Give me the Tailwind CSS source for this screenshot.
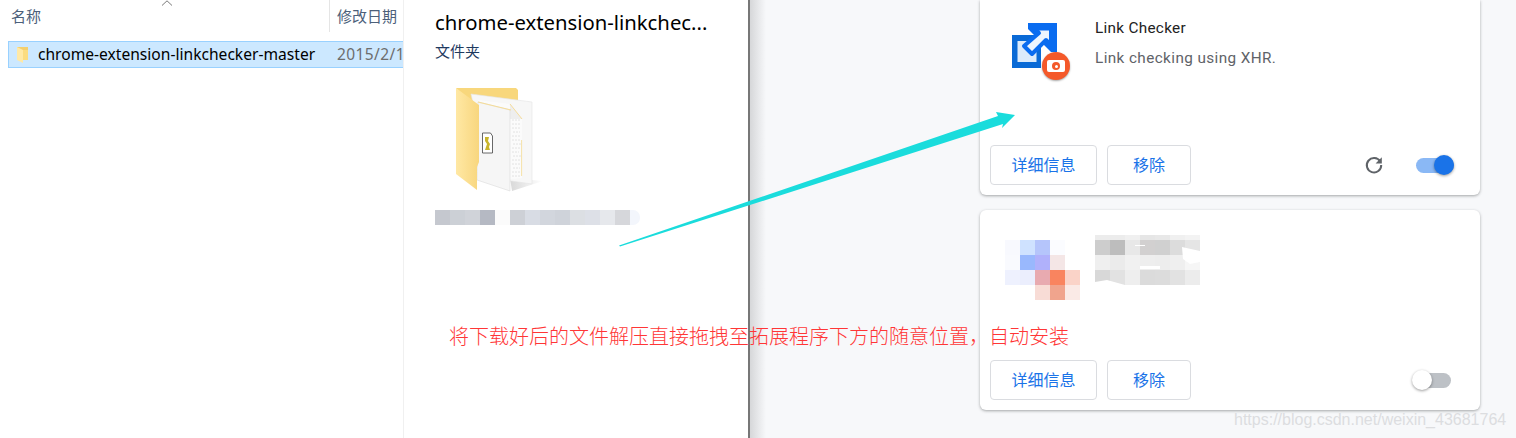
<!DOCTYPE html>
<html lang="zh-CN">
<head>
<meta charset="UTF-8">
<title>Link Checker</title>
<script src="https://cdn.jsdelivr.net/npm/@tailwindcss/browser@4"></script>
</head>
<body class="relative w-[1516px] h-[438px] overflow-hidden bg-[#f7f8fa] font-['Noto_Sans','Noto_Sans_CJK_SC',sans-serif]">
<div class="flex h-full">
  <!-- explorer list -->
  <div class="w-[403px] h-full shrink-0 bg-white overflow-hidden">
    <div class="flex h-[32px] text-[15px] text-[#4c607a] relative">
      <div class="w-[330px] border-r border-[#e5e5e5] pl-[11px] pt-[5px] font-['Noto_Sans_CJK_SC',sans-serif]">名称</div>
      <div class="pl-[7px] pt-[5px] font-['Noto_Sans_CJK_SC',sans-serif]">修改日期</div>
      <svg class="absolute left-[161px] top-0" width="12" height="6" viewBox="0 0 12 6" fill="none" stroke="#7a7a7a"><path d="M1 5.5 6 .8l5 4.7"/></svg>
    </div>
    <div class="mt-[9px] ml-[8px] h-[27px] flex items-center bg-[#cce8ff] border border-[#99d1ff] border-r-0 overflow-hidden whitespace-nowrap">
      <svg class="ml-[7px] shrink-0" width="14" height="18" viewBox="0 0 14 18"><path d="M1 1h11v13H1z" fill="#f3cf6e"/><path d="M1 1l6 3v13l-6-3z" fill="#ffe9a6"/><path d="M7 4h5v10H7z" fill="#fbdc80"/></svg>
      <span class="ml-[8px] w-[299px] shrink-0 text-[15.6px] text-black">chrome-extension-linkchecker-master</span>
      <span class="text-[15.5px] text-[#6d6d6d] tracking-[.4px]">2015/2/1</span>
    </div>
  </div>
  <!-- preview pane -->
  <div class="w-[347px] h-full shrink-0 bg-white border-l border-[#f0f0f0] border-r-2 border-r-[#777] pl-[31px]">
    <div class="pt-[8px] text-[20.3px] leading-[28px] text-black whitespace-nowrap">chrome-extension-linkchec...</div>
    <div class="mt-[5px] text-[15px] leading-[20px] text-[#1f3a5f] font-['Noto_Sans_CJK_SC',sans-serif]">文件夹</div>
    <svg class="mt-[24px] ml-[15px] block" width="95" height="110" viewBox="450 85 95 110">
      <defs>
        <linearGradient id="flap" x1="0" x2="1"><stop offset="0" stop-color="#ffe8a4"/><stop offset="1" stop-color="#f8d67e"/></linearGradient>
        <linearGradient id="shade" x1="0" x2="1"><stop offset="0" stop-color="#d8d8d8"/><stop offset="1" stop-color="#ffffff"/></linearGradient>
      </defs>
      <path d="M510 178 543 181 512 191Z" fill="url(#shade)"/>
      <path d="M456 88H516L518 90V106H470Z" fill="#f8d77c"/>
      <path d="M471 94 532 102V184L490 178Z" fill="#f7f7f7" stroke="#e4e4e4" stroke-width=".6"/>
      <path d="M478 100 510 104 522 119V178L490 181Z" fill="#fbfbfb"/>
      <path d="M510 104 522 119H510Z" fill="#eeeeee"/>
      <path d="M510 104 522 119" stroke="#f6dc9a" stroke-width="1"/>
      <path d="M512 120h9M512 124h8M512 128h9M513 132h7M512 136h9M512 140h8M513 144h8M512 148h9M512 152h7M513 156h8M512 160h9M512 164h8M513 168h7M512 172h9M512 176h8" stroke="#e2e2e2" stroke-width="1" stroke-dasharray="2 1"/>
      <path d="M521.6 140v36" stroke="#f6e2a8" stroke-width="1"/>
      <path d="M478 102 510 110V191L477 180Z" fill="#f6f6f6" stroke="#dcdcdc" stroke-width=".6"/>
      <path d="M478 102 511 110" stroke="#f5dc98" stroke-width="1.2"/>
      <path d="M456 88 479 105V162L477 167V190L456 174Z" fill="url(#flap)"/>
      <path d="M482.5 133h8l2 3v17h-10Z" fill="#fff" stroke="#444" stroke-width=".8"/>
      <path d="M485 137h4l-1 4 2 3-1 3 1 3h-5l1-3 1-3-2-3Z" fill="#c9b52c"/>
    </svg>
    <div class="mt-[15px] flex h-[15px] w-[205px] overflow-hidden rounded-r-[7px]">
      <div class="w-[15px] bg-[#c5c8cf]"></div><div class="w-[15px] bg-[#ccd0d6]"></div><div class="w-[15px] bg-[#d0d3d9]"></div><div class="w-[15px] bg-[#b5b9c3]"></div><div class="w-[15px] bg-[#fbfbfb]"></div><div class="w-[15px] bg-[#cdd0d6]"></div><div class="w-[15px] bg-[#d8dce4]"></div><div class="w-[15px] bg-[#d2d6dd]"></div><div class="w-[15px] bg-[#cfd3da]"></div><div class="w-[15px] bg-[#dcdfe3]"></div><div class="w-[15px] bg-[#dde0e7]"></div><div class="w-[15px] bg-[#e6e8ec]"></div><div class="w-[15px] bg-[#d6d7db]"></div><div class="w-[10px] bg-[#f3f6fc]"></div>
    </div>
  </div>
  <!-- extensions page -->
  <div class="relative flex-1 h-full pl-[230px]">
    <div class="absolute left-0 top-0 w-[16px] h-full bg-gradient-to-r from-[#d6d7d9] to-transparent"></div>
    <div class="w-[500px] h-[195px] mt-0 bg-white rounded-b-[6px] shadow-[0_1px_3px_rgba(60,64,67,.45)] flex flex-col relative">
      <div class="flex flex-1 pl-[32px] pt-[23px]">
        <div class="relative w-[45px] h-[45px] shrink-0">
          <svg class="blur-[0.5px]" width="45" height="45" viewBox="0 0 45 45">
            <rect x="0" y="12" width="29" height="33" fill="#0a6ad6"/>
            <rect x="5.5" y="18" width="19" height="21" fill="#dcebfb"/>
            <path d="M16 0H45V29H39L16 6Z" fill="#0a6cf0"/>
            <path d="M22 5.5H39V22L34 17 20 31 12 23 27 10Z" fill="#eef5fe" stroke="#0a6cf0" stroke-width="4" stroke-linejoin="round"/>
          </svg>
          <div class="absolute left-[30px] top-[29px] w-[28px] h-[28px] rounded-full bg-[#f4592a] shadow-[0_1px_2px_rgba(0,0,0,.35)] flex items-center justify-center">
            <div class="w-[18px] h-[12px] rounded-[2px] bg-white flex items-center justify-center">
              <div class="w-[8px] h-[8px] rounded-full bg-[#f4592a] flex items-center justify-center"><div class="w-[3px] h-[3px] rounded-full bg-white"></div></div>
            </div>
          </div>
        </div>
        <div class="ml-[38px] font-['Roboto',sans-serif]">
          <div class="-mt-[5px] text-[15.3px] leading-[20px] text-[#222] tracking-[.3px]">Link Checker</div>
          <div class="mt-[10px] text-[15.3px] leading-[20px] text-[#5f6368] tracking-[.4px]">Link checking using XHR.</div>
        </div>
      </div>
      <div class="flex items-center pl-[10px] pb-[10px] h-[50px]">
        <button class="w-[107px] h-[40px] pb-[2px] border border-[#dadce0] rounded-[4px] text-[16px] text-[#1a73e8] font-['Noto_Sans_CJK_SC',sans-serif]">详细信息</button>
        <button class="ml-[10px] w-[84px] h-[40px] pb-[2px] border border-[#dadce0] rounded-[4px] text-[16px] text-[#1a73e8] font-['Noto_Sans_CJK_SC',sans-serif]">移除</button>
        <svg class="ml-[173px]" width="20" height="20" viewBox="0 0 20 20" fill="none"><path d="M16.2 6.6A7.2 7.2 0 1 0 17.2 10" stroke="#5f6368" stroke-width="2"/><path d="M17.8 2.2V8.4H11.6Z" fill="#5f6368"/></svg>
        <div class="relative ml-[32px] w-[38px] h-[15px] rounded-full bg-[#8ab8f5]">
          <div class="absolute right-0 -top-[2.5px] w-[20px] h-[20px] rounded-full bg-[#1a73e8] shadow-[0_1px_3px_rgba(0,0,0,.4)]"></div>
        </div>
      </div>
    </div>
    <div class="w-[500px] h-[200px] mt-[15px] bg-white rounded-[6px] shadow-[0_1px_3px_rgba(60,64,67,.45)] flex flex-col">
      <div class="flex flex-1 pl-[25px] pt-[25px]">
        <div class="grid grid-cols-[repeat(5,15px)] grid-rows-[repeat(4,15px)] mt-[5px] h-[60px]">
          <div class="bg-[#f8f9fe]"></div><div class="bg-[#cfe2ff]"></div><div class="bg-[#b5c5fb]"></div><div class="bg-[#fbfcff]"></div><div></div>
          <div class="bg-[#f9fafe]"></div><div class="bg-[#99b8fd]"></div><div class="bg-[#b0b1fb]"></div><div class="bg-[#f4e6e6]"></div><div></div>
          <div class="bg-[#eef1fe]"></div><div class="bg-[#ebeefd]"></div><div class="bg-[#e8aab0]"></div><div class="bg-[#f9845f]"></div><div class="bg-[#fad3c8]"></div>
          <div></div><div></div><div class="bg-[#f8dcd6]"></div><div class="bg-[#f0a48d]"></div><div class="bg-[#faeae6]"></div>
        </div>
        <div class="relative ml-[15px] grid grid-cols-[repeat(7,15px)] grid-rows-[5px_15px_15px_15px] h-[50px]">
          <div class="bg-[#ececec]"></div><div class="bg-[#ececec]"></div><div class="bg-[#f0f0f0]"></div><div class="bg-[#e6e6e6]"></div><div class="bg-[#e8e8e8]"></div><div class="bg-[#f0f0f0]"></div><div class="bg-[#f3f3f3]"></div>
          <div class="bg-[#cdcdcd]"></div><div class="bg-[#bdbdbd]"></div><div class="bg-[#e8e8e8]"></div><div class="bg-[#d2d0d0]"></div><div class="bg-[#d0d0d0]"></div><div class="bg-[#dcdcdc]"></div><div class="bg-[#e5e5e5]"></div>
          <div class="bg-[#efefef]"></div><div class="bg-[#ebebeb]"></div><div class="bg-[#f1f1f1]"></div><div class="bg-[#eeeeee]"></div><div class="bg-[#ededed]"></div><div class="bg-[#efefef]"></div><div class="bg-[#f6f6f6]"></div>
          <div class="bg-[#d8d8d8]"></div><div class="bg-[#e2e2e2]"></div><div class="bg-[#eeeeee]"></div><div class="bg-[#dbdbdb]"></div><div class="bg-[#dcdcdc]"></div><div class="bg-[#e2e2e2]"></div><div class="bg-[#ececec]"></div>
          <!-- white notches left by the retouching -->
          <svg class="absolute left-0 top-0" width="105" height="52" viewBox="0 0 105 52"><path d="M87 12 105 16V27L95 29 88 24ZM0 47 12 45 30 50V52H0ZM40 10H50V11H40ZM45 31H65V34H45Z" fill="#fff"/></svg>
        </div>
      </div>
      <div class="flex items-center pl-[10px] pb-[10px] h-[50px]">
        <button class="w-[107px] h-[40px] pb-[2px] border border-[#dadce0] rounded-[4px] text-[16px] text-[#1a73e8] font-['Noto_Sans_CJK_SC',sans-serif]">详细信息</button>
        <button class="ml-[10px] w-[84px] h-[40px] pb-[2px] border border-[#dadce0] rounded-[4px] text-[16px] text-[#1a73e8] font-['Noto_Sans_CJK_SC',sans-serif]">移除</button>
        <div class="relative ml-[231px] w-[29px] h-[15px] rounded-full bg-[#bdc1c6]">
          <div class="absolute -left-[10px] -top-[2.5px] w-[20px] h-[20px] rounded-full bg-white shadow-[0_1px_3px_rgba(0,0,0,.4)]"></div>
        </div>
      </div>
    </div>
  </div>
</div>
<!-- annotations drawn over the screenshot -->
<svg class="absolute left-0 top-0 pointer-events-none" width="1516" height="438" viewBox="0 0 1516 438">
  <path d="M619 245.6 998 116 996 112 1015 115 1002 128 1003 124 620 246.6Z" fill="#1adcdc"/>
</svg>
<div class="absolute left-[449px] top-[322px] text-[20px] leading-[28px] text-[#ff3636] whitespace-nowrap font-['Noto_Sans_CJK_SC',sans-serif] font-light">将下载好后的文件解压直接拖拽至拓展程序下方的随意位置，自动安装</div>
<div class="absolute left-[1234px] top-[411px] text-[16px] leading-[18px] text-[#dcdde0] whitespace-nowrap font-['Liberation_Sans',sans-serif]">https://blog.csdn.net/weixin_43681764</div>
</body>
</html>
